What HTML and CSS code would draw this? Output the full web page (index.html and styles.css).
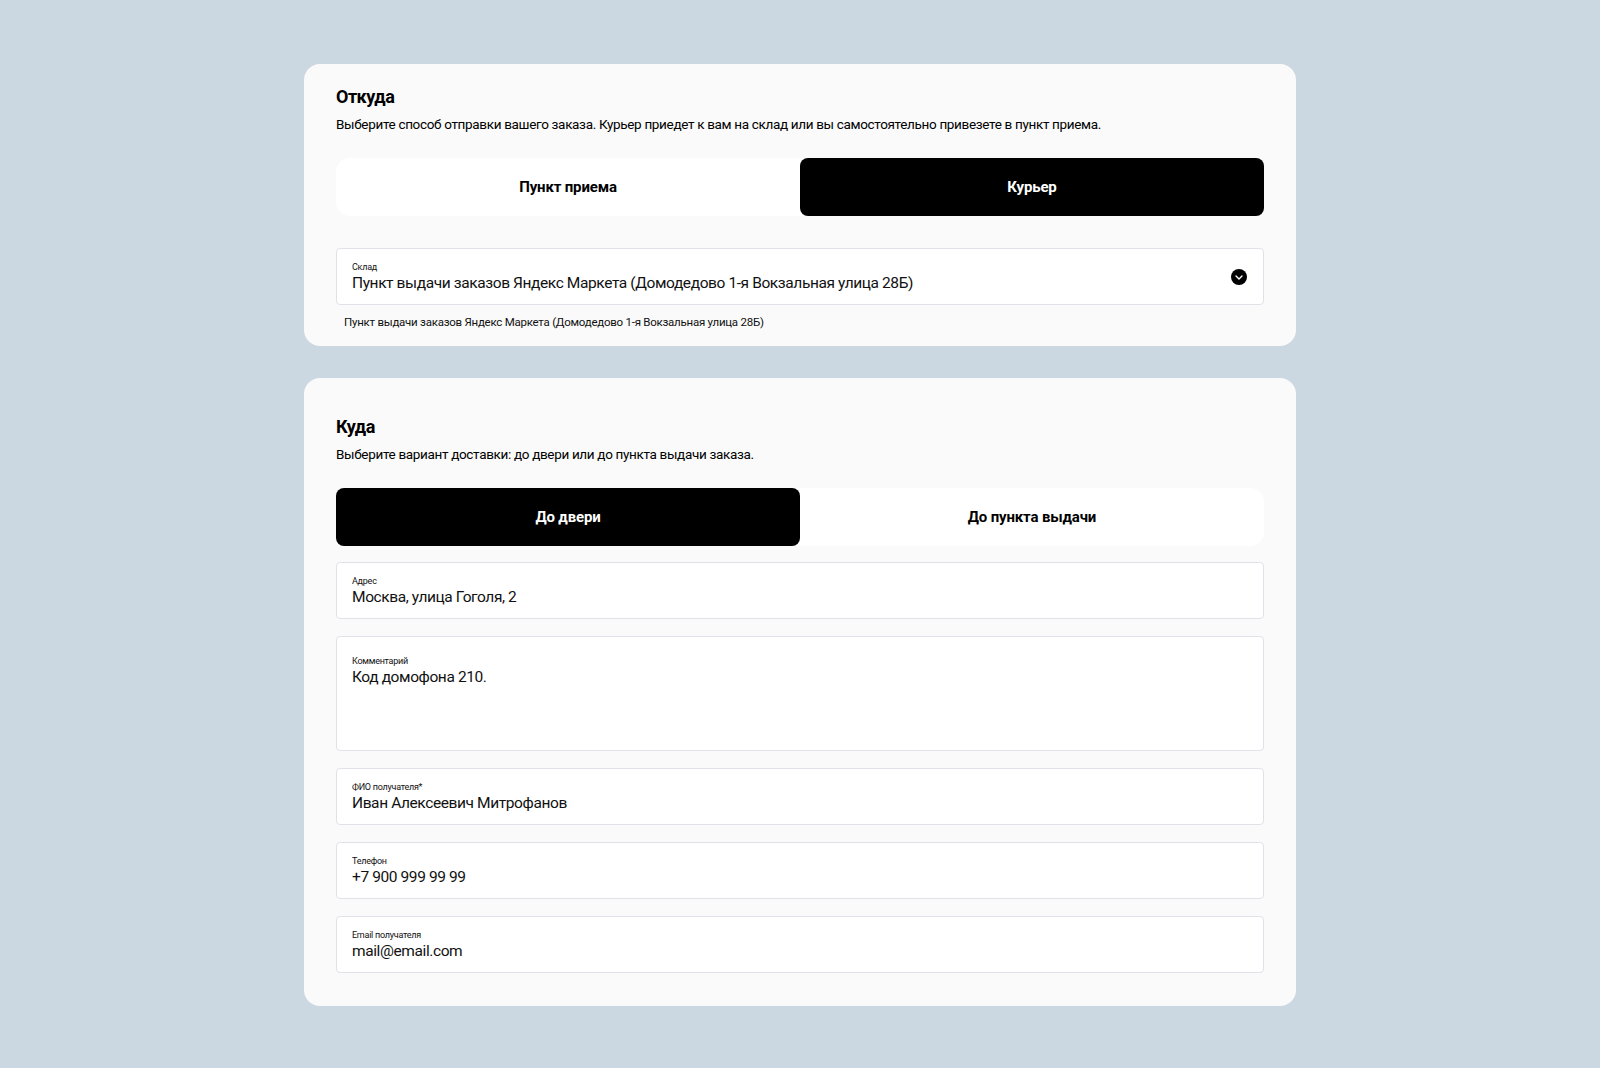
FILE: index.html
```html
<!DOCTYPE html>
<html lang="ru">
<head>
<meta charset="utf-8">
<title>Доставка</title>
<link rel="stylesheet" href="styles.css">
</head>
<body>
<main class="page">
  <section class="card card-from">
    <h2 class="card-title">Откуда</h2>
    <p class="card-sub">Выберите способ отправки вашего заказа. Курьер приедет к вам на склад или вы самостоятельно привезете в пункт приема.</p>
    <div class="toggle">
      <div class="toggle-item">Пункт приема</div>
      <div class="toggle-item active">Курьер</div>
    </div>
    <div class="field field-select">
      <div class="field-body">
        <div class="field-label">Склад</div>
        <div class="field-value">Пункт выдачи заказов Яндекс Маркета (Домодедово 1-я Вокзальная улица 28Б)</div>
      </div>
      <svg class="chevron" width="16" height="16" viewBox="0 0 16 16" aria-hidden="true">
        <circle cx="8" cy="8" r="8" fill="#000"/>
        <polyline points="5,7 8,10 11,7" fill="none" stroke="#fff" stroke-width="1.4" stroke-linecap="round" stroke-linejoin="round"/>
      </svg>
    </div>
    <div class="field-hint">Пункт выдачи заказов Яндекс Маркета (Домодедово 1-я Вокзальная улица 28Б)</div>
  </section>

  <section class="card card-to">
    <h2 class="card-title">Куда</h2>
    <p class="card-sub">Выберите вариант доставки: до двери или до пункта выдачи заказа.</p>
    <div class="toggle">
      <div class="toggle-item active">До двери</div>
      <div class="toggle-item">До пункта выдачи</div>
    </div>
    <div class="fields">
      <div class="field">
        <div class="field-body">
          <div class="field-label">Адрес</div>
          <div class="field-value">Москва, улица Гоголя, 2</div>
        </div>
      </div>
      <div class="field field-area">
        <div class="field-body">
          <div class="field-label">Комментарий</div>
          <div class="field-value">Код домофона 210.</div>
        </div>
      </div>
      <div class="field">
        <div class="field-body">
          <div class="field-label">ФИО получателя*</div>
          <div class="field-value">Иван Алексеевич Митрофанов</div>
        </div>
      </div>
      <div class="field">
        <div class="field-body">
          <div class="field-label">Телефон</div>
          <div class="field-value">+7 900 999 99 99</div>
        </div>
      </div>
      <div class="field">
        <div class="field-body">
          <div class="field-label">Email получателя</div>
          <div class="field-value">mail@email.com</div>
        </div>
      </div>
    </div>
  </section>
</main>
</body>
</html>
```

FILE: styles.css
```css
* { box-sizing: border-box; }

html, body {
  margin: 0;
  padding: 0;
}

body {
  background: #ccd8e1;
  font-family: Roboto, "Noto Sans", "Liberation Sans", sans-serif;
  color: #000;
  min-height: 1068px;
}

.page {
  width: 992px;
  margin: 0 auto;
  padding-top: 64px;
  display: flex;
  flex-direction: column;
  gap: 32px;
}

.card {
  background: #fafafa;
  border-radius: 16px;
  padding: 21px 32px 16px;
}

.card-to {
  padding-top: 37px;
  padding-bottom: 33px;
}

.card-title {
  margin: 0;
  font-size: 18px;
  line-height: 24px;
  font-weight: 700;
  letter-spacing: -0.5px;
}

.card-sub {
  margin: 5px 0 0;
  font-size: 13.5px;
  line-height: 20px;
  letter-spacing: -0.33px;
}

.toggle {
  margin-top: 24px;
  display: grid;
  grid-template-columns: 1fr 1fr;
  height: 58px;
  background: #fff;
  border-radius: 14px;
}

.toggle-item {
  display: flex;
  align-items: center;
  justify-content: center;
  font-size: 15px;
  font-weight: 700;
  border-radius: 8px;
  letter-spacing: -0.15px;
}

.toggle-item.active {
  background: #000;
  color: #fff;
}

.card-from .field-select {
  margin-top: 32px;
}

.field {
  background: #fff;
  border: 1px solid #e1e1e7;
  border-radius: 4px;
  height: 57px;
  padding: 12px 16px 0 15px;
  display: flex;
  align-items: flex-start;
}

.field-body {
  flex: 1;
  min-width: 0;
}

.field-label {
  font-size: 9px;
  line-height: 12px;
  letter-spacing: -0.25px;
  color: #111;
}

.field-value {
  font-size: 15.5px;
  line-height: 20px;
  letter-spacing: -0.4px;
  color: #111;
  white-space: nowrap;
}

.chevron {
  flex: none;
  align-self: center;
  margin-top: -12px;
}

.field-hint {
  margin-top: 9px;
  padding-left: 8px;
  font-size: 11.5px;
  line-height: 16px;
  letter-spacing: -0.25px;
  color: #111;
}

.fields {
  margin-top: 16px;
  display: flex;
  flex-direction: column;
  gap: 17px;
}

.field-area {
  height: 115px;
  padding-top: 18px;
}
```
